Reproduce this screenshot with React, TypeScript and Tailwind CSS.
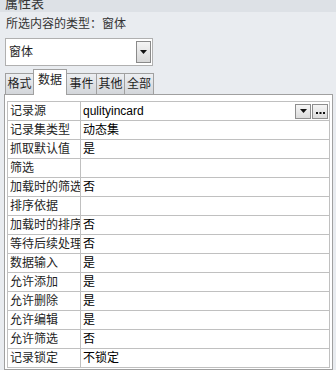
const font = { fontFamily: '"Liberation Sans", "Noto Sans CJK SC", sans-serif' };

const rows: [string, string][] = [
  ["记录源", "qulityincard"],
  ["记录集类型", "动态集"],
  ["抓取默认值", "是"],
  ["筛选", ""],
  ["加载时的筛选", "否"],
  ["排序依据", ""],
  ["加载时的排序", "否"],
  ["等待后续处理", "否"],
  ["数据输入", "是"],
  ["允许添加", "是"],
  ["允许删除", "是"],
  ["允许编辑", "是"],
  ["允许筛选", "否"],
  ["记录锁定", "不锁定"],
];

const tabs = [
  { label: "格式", w: "w-[29px]" },
  { label: "数据", w: "w-[34px]", active: true },
  { label: "事件", w: "w-[31px]" },
  { label: "其他", w: "w-[29px]" },
  { label: "全部", w: "w-[30px]" },
];

function Arrow() {
  return (
    <svg width="7" height="4" viewBox="0 0 7 4">
      <path d="M0 0h7L3.5 4z" fill="#111" />
    </svg>
  );
}

function Dots() {
  return (
    <svg width="9" height="2" viewBox="0 0 9 2" className="mt-[3px]">
      <rect x="0" y="0" width="2" height="2" fill="#111" />
      <rect x="3.5" y="0" width="2" height="2" fill="#111" />
      <rect x="7" y="0" width="2" height="2" fill="#111" />
    </svg>
  );
}

function SmallButton({ children }: { children: React.ReactNode }) {
  return (
    <div className="flex h-[15px] w-[16px] items-center justify-center border border-[#8e8e8e] bg-gradient-to-b from-[#f6f6f6] to-[#dcdcdc]">
      {children}
    </div>
  );
}

export default function App() {
  return (
    <div
      className="flex h-[370px] w-[336px] flex-col overflow-hidden bg-[#e9ecf0] text-[12px] text-[#1e1e1e]"
      style={font}
    >
      <div className="h-[12px] shrink-0 overflow-hidden bg-[#dde1e6] pl-[5px]">
        <div className="-mt-[4px] text-[13px] leading-[16px] text-[#333]">属性表</div>
      </div>

      <div className="h-[26px] shrink-0 pl-[6px] pt-[4px] leading-[16px] text-[#333]">
        所选内容的类型：窗体
      </div>

      <div className="ml-[5px] flex h-[28px] w-[148px] shrink-0 items-center justify-between border border-[#b0b0b0] bg-white pl-[3px] pr-[1px]">
        <span>窗体</span>
        <div className="flex h-[22px] w-[15px] items-center justify-center border border-[#8a8a8a] bg-gradient-to-b from-[#f4f4f4] to-[#d8d8d8]">
          <Arrow />
        </div>
      </div>

      <div className="relative z-10 ml-[5px] mt-[3px] flex h-[26px] shrink-0 items-end">
        {tabs.map((t) => (
          <div
            key={t.label}
            className={
              t.active
                ? `-ml-px flex h-[26px] ${t.w} items-start justify-center border border-b-0 border-[#a0a0a0] bg-white pt-[2px] leading-[16px]`
                : `-ml-px flex h-[22px] ${t.w} items-center justify-center border border-b border-[#a0a0a0] bg-gradient-to-b from-[#eceef1] to-[#d3d6da] leading-[16px] first:ml-0`
            }
          >
            {t.label}
          </div>
        ))}
      </div>

      <div className="-mt-px ml-[4px] w-[329px] flex-1 border border-[#a0a0a0] bg-white px-[2px] pt-[6px]">
        <div className="border-x border-t border-[#c0c0c0]">
          {rows.map(([label, value], i) => (
            <div key={label} className="flex h-[19px] border-b border-[#c0c0c0] leading-[18px]">
              <div className="w-[73px] shrink-0 overflow-hidden whitespace-nowrap border-r border-[#c0c0c0] pl-[2px]">
                {label}
              </div>
              <div className="flex flex-1 items-center justify-between pl-[2px] pr-px text-black">
                <span>{value}</span>
                {i === 0 && (
                  <div className="flex gap-px">
                    <SmallButton>
                      <Arrow />
                    </SmallButton>
                    <SmallButton>
                      <Dots />
                    </SmallButton>
                  </div>
                )}
              </div>
            </div>
          ))}
        </div>
      </div>
    </div>
  );
}
